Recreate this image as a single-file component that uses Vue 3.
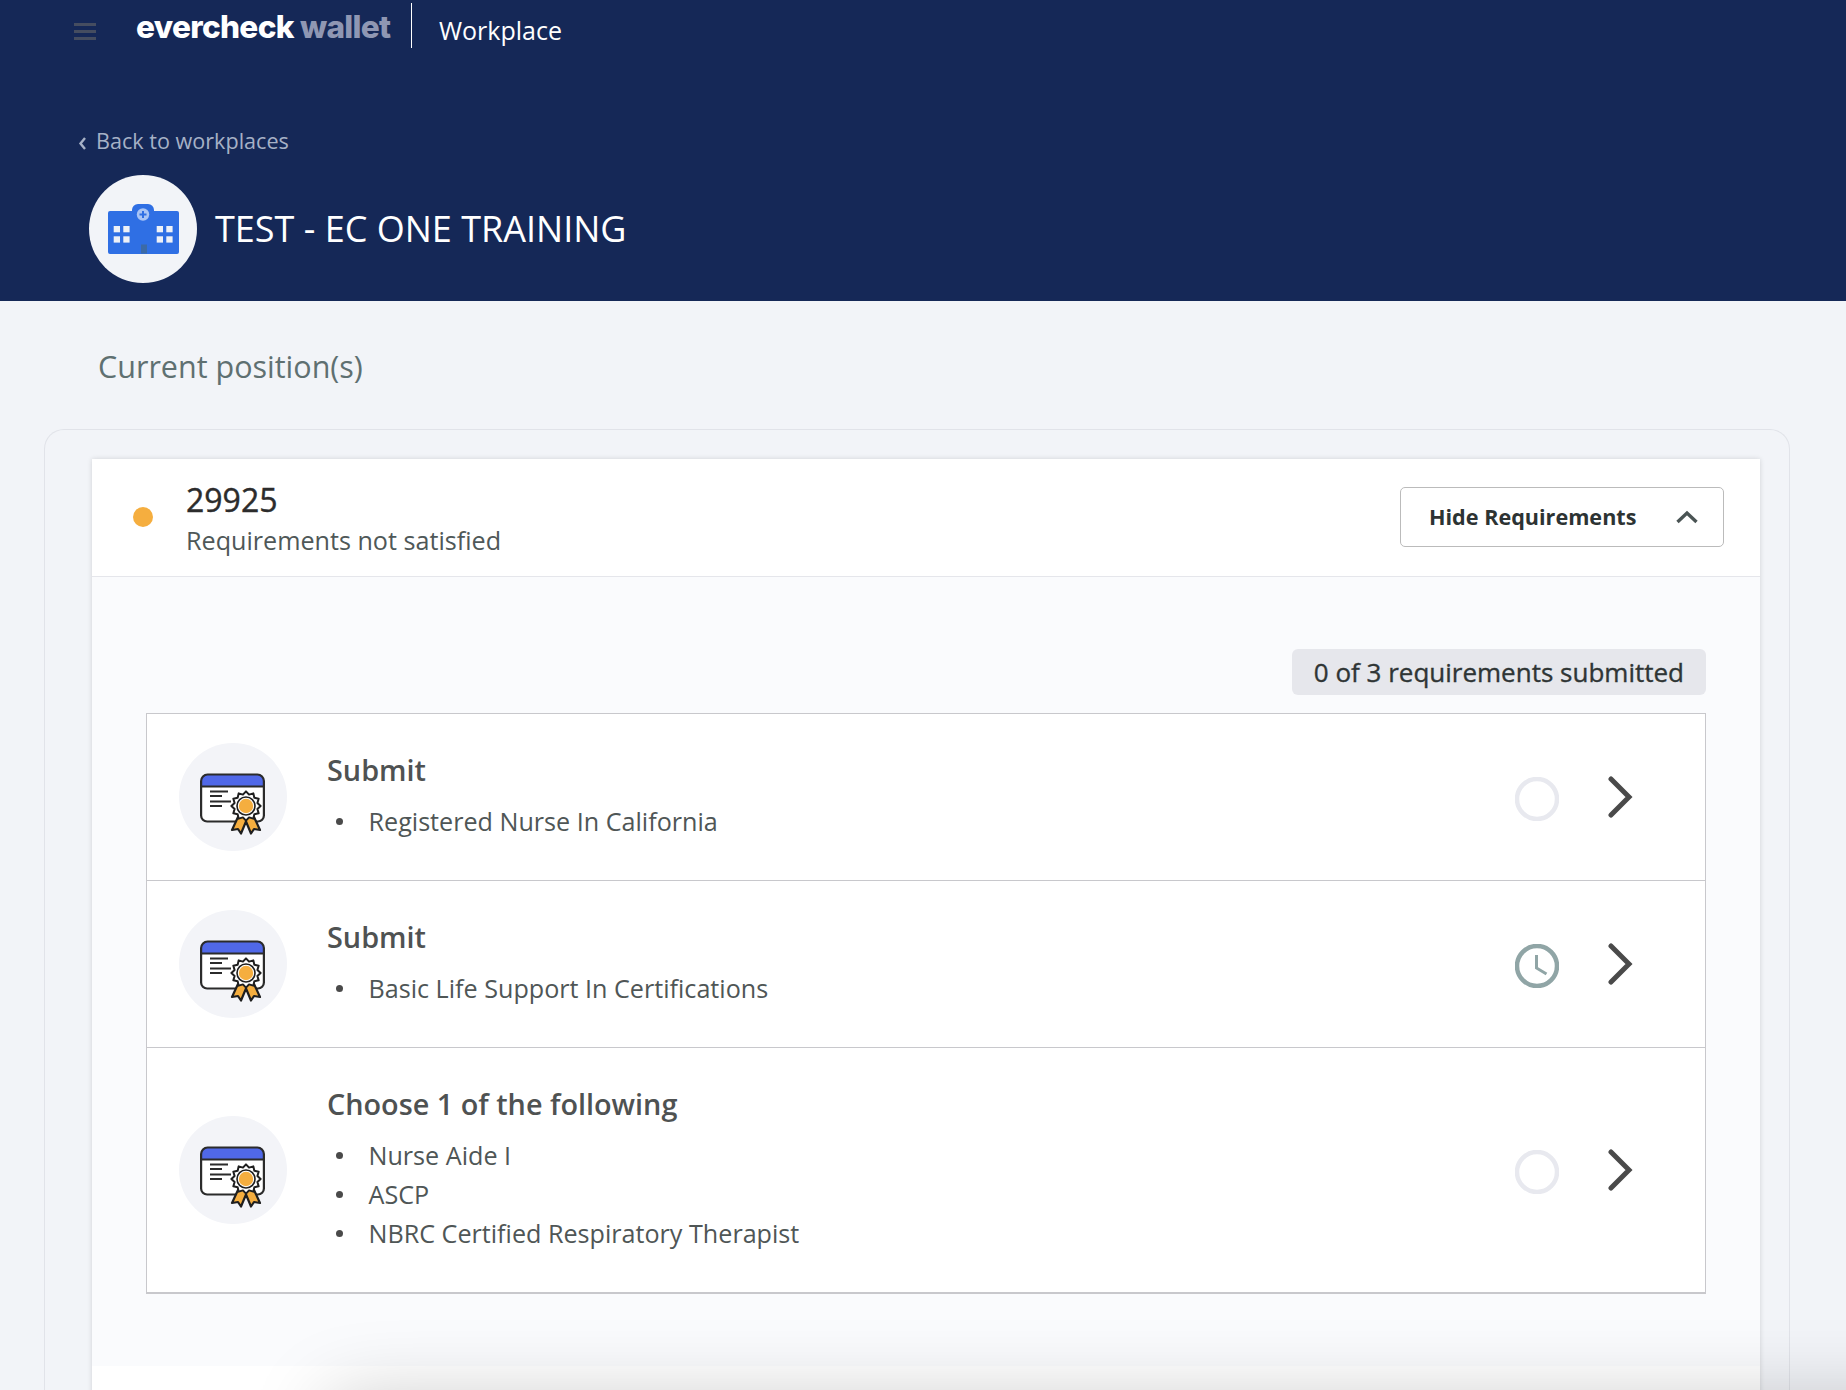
<script setup>
const rows = [
  { title: 'Submit', items: ['Registered Nurse In California'], status: 'empty' },
  { title: 'Submit', items: ['Basic Life Support In Certifications'], status: 'clock' },
  { title: 'Choose 1 of the following', items: ['Nurse Aide I', 'ASCP', 'NBRC Certified Respiratory Therapist'], status: 'empty' },
]
const sealPath = (() => {
  const pts = []
  const n = 12
  for (let i = 0; i < n * 2; i++) {
    const r = i % 2 === 0 ? 14.6 : 11.8
    const a = (Math.PI * i) / n
    pts.push(`${(46 + r * Math.sin(a)).toFixed(2)} ${(33 - r * Math.cos(a)).toFixed(2)}`)
  }
  return 'M' + pts.join('L') + 'Z'
})()
</script>

<template>
  <div class="page">
    <header class="hero">
      <div class="topbar">
        <div class="burger"><span></span><span></span><span></span></div>
        <div class="logo">evercheck <em>wallet</em></div>
        <div class="sep"></div>
        <div class="section">Workplace</div>
      </div>
      <a class="back">
        <svg width="9" height="14" viewBox="0 0 9 14"><path d="M7 2 2.500 7.500 7 13" fill="none" stroke="#a6b1c6" stroke-width="2.400"/></svg>
        <span>Back to workplaces</span>
      </a>
      <div class="org">
        <div class="org-badge">
          <svg width="71" height="50" viewBox="0 0 71 50">
            <path d="M2 7h22V6a6 6 0 0 1 6-6h10a6 6 0 0 1 6 6v1h23a2 2 0 0 1 2 2v39a2 2 0 0 1-2 2H2a2 2 0 0 1-2-2V9a2 2 0 0 1 2-2z" fill="#2f6fe4"/>
            <circle cx="35" cy="10.500" r="6.200" fill="#a9c4f5"/>
            <path d="M35 7v7M31.500 10.500h7" stroke="#2f6fe4" stroke-width="2"/>
            <g fill="#eef1f7">
              <rect x="5.700" y="22" width="6.300" height="6.300"/><rect x="15.300" y="22" width="6.300" height="6.300"/>
              <rect x="5.700" y="32.300" width="6.300" height="6.300"/><rect x="15.300" y="32.300" width="6.300" height="6.300"/>
              <rect x="48.700" y="22" width="6.300" height="6.300"/><rect x="58.300" y="22" width="6.300" height="6.300"/>
              <rect x="48.700" y="32.300" width="6.300" height="6.300"/><rect x="58.300" y="32.300" width="6.300" height="6.300"/>
            </g>
            <rect x="33" y="40.500" width="6" height="9" fill="#3c6aa6"/>
          </svg>
        </div>
        <h1>TEST - EC ONE TRAINING</h1>
      </div>
    </header>

    <main class="content">
      <h2>Current position(s)</h2>
      <section class="shell">
        <article class="card">
          <div class="card-head">
            <span class="dot"></span>
            <div class="head-text">
              <div class="pos">29925</div>
              <div class="state">Requirements not satisfied</div>
            </div>
            <button class="toggle">
              <span>Hide Requirements</span>
              <svg width="24" height="14" viewBox="0 0 24 14"><path d="M2.500 12 12 3l9.500 9" fill="none" stroke="#4a5454" stroke-width="3.400"/></svg>
            </button>
          </div>
          <div class="card-body">
            <div class="badge-line"><span class="badge">0 of 3 requirements submitted</span></div>
            <ul class="reqs">
              <li v-for="(r, i) in rows" :key="i" class="req">
                <div class="cert-wrap">
                  <svg width="66" height="62" viewBox="0 0 66 62">
                    <path d="M1.100 42.500V8a6.500 6.500 0 0 1 6.500-6.500h49.800A6.500 6.500 0 0 1 63.900 8v34.500a6 6 0 0 1-6 6H7.100a6 6 0 0 1-6-6z" fill="#fff"/>
                    <path d="M1.100 13.500V8a6.500 6.500 0 0 1 6.500-6.500h49.800A6.500 6.500 0 0 1 63.900 8v5.500z" fill="#5068e8"/>
                    <path d="M1.100 42.500V8a6.500 6.500 0 0 1 6.500-6.500h49.800A6.500 6.500 0 0 1 63.900 8v34.500a6 6 0 0 1-6 6H7.100a6 6 0 0 1-6-6zM1.100 13.500h62.800" fill="none" stroke="#2b2b2b" stroke-width="2.200"/>
                    <path d="M10 18.500h18M10 23h12M10 28.500h21M10 33h12" stroke="#2b2b2b" stroke-width="1.800"/>
                    <path d="M38 44 32 57l6-1 3 4.500 5-12 5 12 3-4.500 6 1-6-13z" fill="#f5ae3f" stroke="#1f1f1f" stroke-width="2.200" stroke-linejoin="round"/>
                    <path :d="sealPath" fill="#fff" stroke="#1f1f1f" stroke-width="2" stroke-linejoin="round"/>
                    <circle cx="46" cy="33" r="9" fill="#fff" stroke="#1f1f1f" stroke-width="1.600"/>
                    <circle cx="46" cy="33" r="7.200" fill="#f5ae3f"/>
                  </svg>
                </div>
                <div class="req-text">
                  <div class="req-title">{{ r.title }}</div>
                  <ul class="req-items">
                    <li v-for="it in r.items" :key="it">{{ it }}</li>
                  </ul>
                </div>
                <div class="status">
                  <svg v-if="r.status === 'empty'" width="44" height="44" viewBox="0 0 44 44"><circle cx="22" cy="22" r="20" fill="none" stroke="#e8e9ef" stroke-width="4.500"/></svg>
                  <svg v-else width="44" height="44" viewBox="0 0 44 44"><circle cx="22" cy="22" r="20" fill="none" stroke="#90a5a6" stroke-width="4.500"/><path d="M21.500 11v13l10 6" fill="none" stroke="#90a5a6" stroke-width="3"/></svg>
                </div>
                <svg class="chev" width="25" height="42" viewBox="0 0 25 42"><path d="M3 3l18 18L3 39" fill="none" stroke="#4a4a4a" stroke-width="5" stroke-linecap="round" stroke-linejoin="miter"/></svg>
              </li>
            </ul>
          </div>
          <div class="card-foot"></div>
        </article>
      </section>
    </main>
    <div class="drawer-shadow"></div>
  </div>
</template>

<style>
html, body { margin: 0; height: 100%; overflow: hidden; background: #f2f4f8; }
</style>

<style scoped>
* { box-sizing: border-box; }
.page { position: relative; height: 1390px; overflow: hidden; font-family: "Open Sans", "Liberation Sans", sans-serif; background: #f2f4f8; color: #4a4a4a; }
.hero { height: 301px; background: #152857; color: #fff; padding-top: 3px; }
.topbar { display: flex; align-items: center; height: 45px; padding-left: 74px; }
.burger { width: 22px; display: flex; flex-direction: column; gap: 4px; margin-top: 12px; }
.burger span { display: block; height: 3px; background: #454d60; }
.logo { width: 258px; margin-left: 40px; font-family: Inter, sans-serif; font-weight: 800; font-size: 31.600px; letter-spacing: -0.7px; color: #fff; white-space: nowrap; margin-top: 2px; }
.logo em { font-style: normal; color: #8f97b3; }
.sep { width: 1px; height: 45px; background: #fff; margin-left: 17px; }
.section { font-size: 25px; margin-left: 27px; margin-top: 8px; }
.back { display: flex; align-items: center; gap: 9px; margin: 78px 0 0 78px; font-size: 21.600px; line-height: 30px; color: #a6b1c6; }
.back svg { margin-top: 3px; }
.org { display: flex; align-items: center; margin: 19px 0 0 89px; gap: 18px; }
.org-badge { width: 108px; height: 108px; border-radius: 50%; background: #f2f4f8; display: flex; align-items: center; justify-content: center; }
.org h1 { margin: -2px 0 0; font-size: 36px; font-weight: 400; color: #fff; white-space: nowrap; }
.content { padding: 0 56px 0 44px; }
h2 { margin: 0; padding: 43px 0 0 54px; font-size: 30.500px; line-height: 44px; font-weight: 400; color: #5f7071; height: 128px; }
.shell { border: 1px solid #e1e3e9; border-bottom: 0; border-radius: 20px 20px 0 0; padding: 29px 29px 0 47px; height: 971px; }
.card { background: #fff; box-shadow: 0 0 5px rgba(0, 0, 0, .14); }
.card-head { height: 118px; display: flex; align-items: center; padding: 0 36px 0 41px; border-bottom: 1px solid #e5e6eb; background: #fff; }
.dot { width: 20px; height: 20px; border-radius: 50%; background: #f5ae3f; margin-top: -2px; }
.head-text { margin-left: 33px; flex: 1; }
.pos { font-size: 32px; line-height: 44px; font-weight: 400; -webkit-text-stroke: .4px #2c2c2c; color: #2c2c2c; }
.state { font-size: 25.150px; line-height: 36px; color: #4f5858; }
.toggle { width: 324px; height: 60px; margin-top: -2px; display: flex; align-items: center; justify-content: space-between; padding: 0 24px 0 28px; background: #fff; border: 1px solid #bbb; border-radius: 5px; font: 700 21.600px "Open Sans", sans-serif; color: #2d3333; }
.card-body { background: #fafbfd; padding: 72px 54px; }
.badge-line { display: flex; justify-content: flex-end; margin-bottom: 18px; }
.badge { height: 46px; line-height: 46px; padding: 0 22px; border-radius: 6px; background: #e6e7ec; font-size: 26px; font-weight: 400; -webkit-text-stroke: .35px #2f3535; color: #2f3535; }
.reqs { list-style: none; margin: 0; padding: 0; border: 1px solid #c8c8cc; border-bottom-width: 2px; background: #fff; }
.req { display: flex; align-items: center; padding-left: 32px; border-bottom: 1px solid #c8c8cc; }
.req:last-child { border-bottom: 0; }
.cert-wrap { width: 108px; height: 108px; flex: none; border-radius: 50%; background: #f3f4f8; display: flex; align-items: center; justify-content: center; padding-top: 14px; }
.req-text { margin-left: 40px; flex: 1; padding: 36px 0 39px; }
.req-title { font-size: 28.800px; line-height: 39px; font-weight: 600; color: #4f5252; }
.req-items { list-style: none; margin: 13px 0 0; padding: 0 0 0 41.500px; }
.req-items li { position: relative; font-size: 25.150px; line-height: 39px; color: #4f5656; }
.req-items li::before { content: ""; position: absolute; left: -33px; top: 16px; width: 7px; height: 7px; border-radius: 50%; background: #4a4a4a; }
.status { width: 44px; height: 44px; margin: 3px 49px 0 0; }
.chev { margin-right: 72px; }
.card-foot { height: 100px; background: #fff; }
.drawer-shadow { position: absolute; left: 340px; right: -100px; top: 1410px; height: 200px; box-shadow: 0 0 80px 10px rgba(0, 0, 0, .22); }
</style>
